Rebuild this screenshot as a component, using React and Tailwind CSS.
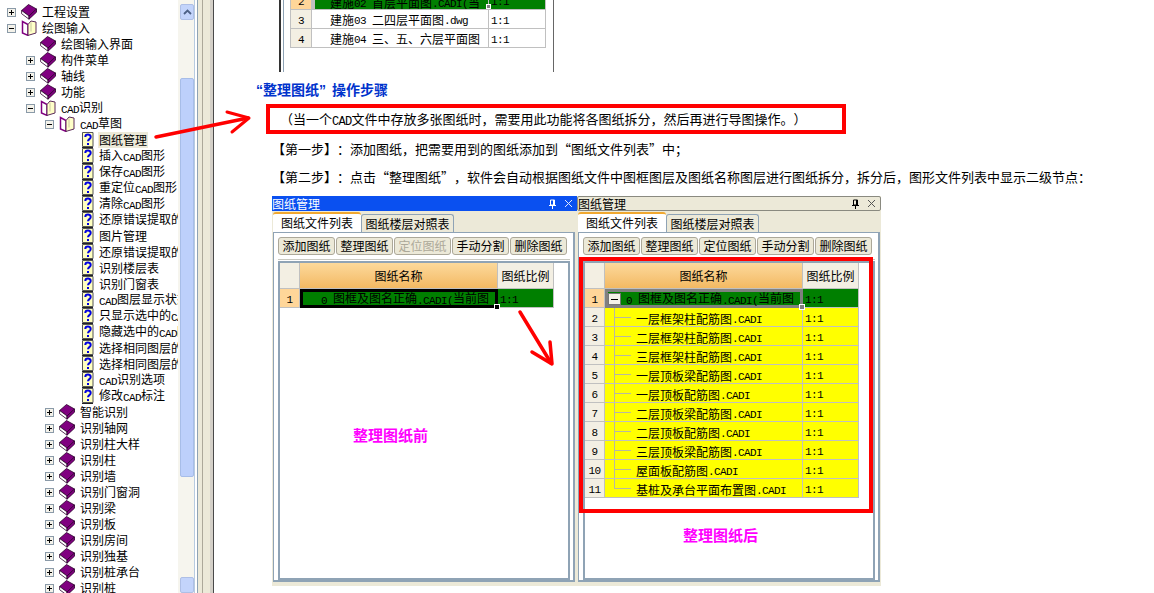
import React from "react";

const FONT = "[font-family:'Noto_Sans_CJK_SC','Liberation_Sans',sans-serif]";

// Latin runs are condensed so that each character takes half of a CJK glyph
function T({ children, big }) {
  const parts = String(children).split(/([A-Za-z0-9.:() ]+)/);
  return (
    <>
      {parts.map((p, i) =>
        /^[A-Za-z0-9.:() ]+$/.test(p) ? (
          <span
            key={i}
            className={`relative top-[1px] font-['Liberation_Mono',monospace] whitespace-pre ${
              big ? "text-[12px] tracking-[-0.7px]" : "text-[11px] tracking-[-0.6px]"
            }`}
          >
            {p}
          </span>
        ) : (
          <span key={i}>{p}</span>
        )
      )}
    </>
  );
}

function Expand({ open }) {
  return (
    <svg width="9" height="9" viewBox="0 0 9 9" className="shrink-0">
      <rect x="0.5" y="0.5" width="8" height="8" fill="#f4f2ea" stroke="#8a9aa8" />
      <path d="M2 4.5H7" stroke="#000" />
      {!open && <path d="M4.5 2V7" stroke="#000" />}
    </svg>
  );
}

function Book() {
  return (
    <svg width="16" height="16" viewBox="0 0 16 16" className="shrink-0">
      <path d="M.6 6.5 7.5.5l8 4.5-7.5 7z" fill="#800080" stroke="#2a002a" strokeWidth="0.8" />
      <path d="M.6 6.5v3.2L8 15.2V12z" fill="#fff" stroke="#2a002a" strokeWidth="0.8" />
      <path d="M8 12 15.5 5v3.2L8 15.2z" fill="#800080" stroke="#2a002a" strokeWidth="0.8" />
    </svg>
  );
}

function OpenBook() {
  return (
    <svg width="16" height="16" viewBox="0 0 16 16" className="shrink-0">
      <path d="M1.5 1.5v11.5l5.5 2.4V4.5z" fill="#fff" stroke="#800080" strokeWidth="1.5" />
      <path d="M7 4.5 10 1l5 1v11L7 15.4z" fill="#ffffc8" stroke="#5a2a5a" strokeWidth="1" />
      <path d="M10 2.5v9" stroke="#c8c8a0" />
    </svg>
  );
}

function Help() {
  return (
    <svg width="16" height="16" viewBox="0 0 16 16" className="shrink-0">
      <path d="M4.5.5H15v14H4.5z" fill="#ffffc0" stroke="#555" />
      <path d="M4 15.5h11" stroke="#222" />
      <path d="M7.3 5c0-3.2 5.4-3.2 5.4-.1 0 2.2-2.7 2.2-2.7 4.4" fill="none" stroke="#0000e0" strokeWidth="2" />
      <path d="M9 11h2v2H9z" fill="#0000e0" />
    </svg>
  );
}

const TREE = [
  [0, "c", "工程设置"],
  [0, "o", "绘图输入"],
  [1, "n", "绘图输入界面"],
  [1, "c", "构件菜单"],
  [1, "c", "轴线"],
  [1, "c", "功能"],
  [1, "o", "CAD识别"],
  [2, "o", "CAD草图"],
  [3, "h", "图纸管理", true],
  [3, "h", "插入CAD图形"],
  [3, "h", "保存CAD图形"],
  [3, "h", "重定位CAD图形"],
  [3, "h", "清除CAD图形"],
  [3, "h", "还原错误提取的CAD图元"],
  [3, "h", "图片管理"],
  [3, "h", "还原错误提取的图片"],
  [3, "h", "识别楼层表"],
  [3, "h", "识别门窗表"],
  [3, "h", "CAD图层显示状态"],
  [3, "h", "只显示选中的CAD图元"],
  [3, "h", "隐藏选中的CAD图元"],
  [3, "h", "选择相同图层的图元"],
  [3, "h", "选择相同图层的线"],
  [3, "h", "CAD识别选项"],
  [3, "h", "修改CAD标注"],
  [2, "c", "智能识别"],
  [2, "c", "识别轴网"],
  [2, "c", "识别柱大样"],
  [2, "c", "识别柱"],
  [2, "c", "识别墙"],
  [2, "c", "识别门窗洞"],
  [2, "c", "识别梁"],
  [2, "c", "识别板"],
  [2, "c", "识别房间"],
  [2, "c", "识别独基"],
  [2, "c", "识别桩承台"],
  [2, "c", "识别桩"],
];

const INDENT = { 0: "pl-[7px]", 1: "pl-[26px]", 2: "pl-[45px]", 3: "pl-[64px]" };

function TreeRow({ level, kind, label, selected }) {
  return (
    <div className={`flex h-4 items-center whitespace-nowrap ${INDENT[level]}`}>
      <div className="flex w-[14px] shrink-0 items-center">
        {kind === "c" && <Expand />}
        {kind === "o" && <Expand open />}
      </div>
      {kind === "c" && <Book />}
      {kind === "n" && <Book />}
      {kind === "o" && <OpenBook />}
      {kind === "h" && <Help />}
      <span className={`ml-[4px] px-[1px] leading-4 ${selected ? "bg-[#ece9d8]" : ""}`}>
        <T>{label}</T>
      </span>
    </div>
  );
}

function Scrollbar() {
  return (
    <div className="flex w-[17px] shrink-0 flex-col bg-[#f6f5ee] pl-[2px] pt-[4px] pb-[0px] border-r border-[#b8cbe0]">
      <div className="flex h-[16px] w-[14px] items-center justify-center rounded-[2px] bg-[#c3d4fb] border border-[#aebfe6]">
        <svg width="9" height="6" viewBox="0 0 9 6">
          <path d="M1 5 4.5 1.5 8 5" fill="none" stroke="#4d6185" strokeWidth="1.8" />
        </svg>
      </div>
      <div className="mt-[58px] h-[412px] w-[14px] rounded-[2px] bg-[#bdd0fb] border border-[#a7bde8]" />
      <div className="mt-[100px] h-[16px] w-[14px] rounded-[2px] bg-[#c3d4fb] border border-[#aebfe6]" />
    </div>
  );
}

function Sidebar() {
  return (
    <div className="flex w-[198px] shrink-0 border-r border-[#8fa3b5]">
      <div className="min-w-0 flex-1 overflow-hidden pt-[4px]">
        {TREE.map(([level, kind, label, selected], i) => (
          <TreeRow key={i} level={level} kind={kind} label={label} selected={selected} />
        ))}
      </div>
      <Scrollbar />
      <div className="w-[2px] shrink-0 bg-white" />
    </div>
  );
}

function Splitter() {
  return (
    <div className="flex w-[18px] shrink-0">
      <div className="w-[5px] bg-[#ece9d8] border-r border-[#aca899]" />
      <div className="w-[7px] bg-[#ece9d8]" />
      <div className="w-[4px] bg-[#d4d0c8] border-r border-[#4a4a4a]" />
      <div className="w-[2px] bg-white" />
    </div>
  );
}

function DocTable() {
  const cell = "flex h-[19px] items-center border-r border-b border-[#c0c0c0] pt-[2px]";
  const rows = [
    ["3", "建施03 二四层平面图.dwg"],
    ["4", "建施04 三、五、六层平面图"],
  ];
  return (
    <div className="ml-[63px] flex h-[72px] w-[275px] overflow-hidden border-l-2 border-r border-l-[#333] border-r-[#666]">
      <div className="ml-[2px] h-full border-l border-[#8fa3b5] pl-[6px]">
        <div className="-mt-[9px] grid w-[255px] grid-cols-[21px_177px_57px] border-l border-[#c0c0c0]">
          <div className={`${cell} justify-center bg-[#ffd699]`}><T>2</T></div>
          <div className={`${cell} relative border-[3px] border-[#808080] bg-[#007f00] pl-[15px] whitespace-nowrap overflow-hidden`}>
            <T>建施02 首层平面图.CADI(当</T>
          </div>
          <div className={`${cell} relative bg-[#007f00] pl-[2px]`}>
            <T>1:1</T>
            <span className="absolute -left-[3px] bottom-[0px] h-[5px] w-[5px] bg-[#808080] border border-white" />
          </div>
          {rows.map(([n, name]) => (
            <React.Fragment key={n}>
              <div className={`${cell} justify-center bg-[#f3efe3]`}><T>{n}</T></div>
              <div className={`${cell} pl-[18px] whitespace-nowrap overflow-hidden`}><T>{name}</T></div>
              <div className={`${cell} pl-[2px]`}><T>1:1</T></div>
            </React.Fragment>
          ))}
        </div>
      </div>
    </div>
  );
}

const BUTTONS = ["添加图纸", "整理图纸", "定位图纸", "手动分割", "删除图纸"];

const ROWS = [
  "一层框架柱配筋图.CADI",
  "二层框架柱配筋图.CADI",
  "三层框架柱配筋图.CADI",
  "一层顶板梁配筋图.CADI",
  "一层顶板配筋图.CADI",
  "二层顶板梁配筋图.CADI",
  "二层顶板配筋图.CADI",
  "三层顶板梁配筋图.CADI",
  "屋面板配筋图.CADI",
  "基桩及承台平面布置图.CADI",
];

function PinClose({ dark }) {
  const c = dark ? "#000" : "#fff";
  return (
    <div className="flex items-center gap-[7px] pr-[4px]">
      <svg width="9" height="10" viewBox="0 0 9 10">
        <path d="M2.5 1h4v5h-4zM1 6.5h7M4.5 6.5V10M5.5 1v5" fill="none" stroke={c} strokeWidth="1" />
      </svg>
      <svg width="9" height="9" viewBox="0 0 9 9">
        <path d="M1 1l7 7M8 1 1 8" stroke={dark ? "#555" : "#dfe8ff"} strokeWidth="1" />
      </svg>
    </div>
  );
}

function Dialog({ after }) {
  const line = "border-r border-b border-[#c0c0c0]";
  const ctrl = "relative flex h-[19px] items-center overflow-hidden whitespace-nowrap";
  return (
    <div className={`flex h-[390px] flex-col bg-[#ece9d8] ${after ? "w-[304px]" : "w-[305px]"}`}>
      <div
        className={`flex h-[15px] shrink-0 items-center justify-between leading-[15px] ${
          after ? "rounded-[2px] border border-[#8a8a80] text-black" : "bg-[#0a50f0] text-white"
        }`}
      >
        <span>图纸管理</span>
        <PinClose dark={after} />
      </div>
      <div className="ml-[1px] flex h-[21px] shrink-0 items-end">
        <div className="flex h-[20px] w-[88px] items-center justify-center rounded-t-[3px] border-t-2 border-[#f0a830] bg-white">
          图纸文件列表
        </div>
        <div className="flex h-[18px] w-[93px] items-center justify-center rounded-t-[3px] border border-b-0 border-[#8fa3b5] bg-[#ece9d8]">
          图纸楼层对照表
        </div>
      </div>
      <div className="ml-[1px] mb-[4px] flex h-[350px] w-[302px] flex-col border border-r-2 border-b-2 border-[#8fa3b5] bg-white pl-[4px] pr-[3px]">
        <div className="flex h-[27px] shrink-0 items-center gap-[1px] pt-[4px] pb-[4px] border-b border-[#c8c8c0]">
          {BUTTONS.map((b) => (
            <div
              key={b}
              className={`flex h-[18px] w-[57px] shrink-0 items-center justify-center rounded-[3px] border border-[#aca899] bg-[#ece9d8] ${
                !after && b === "定位图纸" ? "text-[#aca899]" : "text-black"
              }`}
            >
              {b}
            </div>
          ))}
        </div>
        <div className="mt-[1px] min-h-0 flex-1 border-2 border-[#8fa3b5] bg-white">
          <div className="grid w-[274px] grid-cols-[20px_198px_56px]">
            <div className={`h-[26px] bg-[#f3efe3] ${line}`} />
            <div className={`flex h-[26px] items-center justify-center bg-linear-to-b from-[#fcd99b] to-[#f3b962] ${line}`}>图纸名称</div>
            <div className={`flex h-[26px] items-center justify-center bg-[#f3efe3] ${line}`}>图纸比例</div>

            <div className={`flex h-[19px] items-center justify-center bg-[#ffd699] pt-[2px] ${line}`}><T>1</T></div>
            <div className={`relative flex h-[19px] items-center whitespace-nowrap border-[3px] bg-[#007f00] pl-[18px] pt-[1px] ${after ? "border-[#808080]" : "border-black"}`}>
              {after && (
                <span className="absolute left-[0px] top-[1px] flex h-[12px] w-[13px] items-center justify-center border border-[#777] bg-[#f4f2ea]">
                  <span className="h-[1px] w-[7px] bg-black" />
                </span>
              )}
              <div className="overflow-hidden"><T>0 图框及图名正确.CADI(当前图</T></div>
              <span className={`absolute -right-[5px] -bottom-[5px] z-10 h-[6px] w-[6px] border border-white ${after ? "bg-[#808080]" : "bg-black"}`} />
            </div>
            <div className={`flex h-[19px] items-center bg-[#007f00] pl-[2px] pt-[2px] ${line}`}><T>1:1</T></div>

            {after &&
              ROWS.map((name, i) => (
                <React.Fragment key={name}>
                  <div className={`flex h-[19px] items-center justify-center bg-[#f3efe3] pt-[1px] ${line}`}><T>{String(i + 2)}</T></div>
                  <div className={`${ctrl} bg-[#ffff00] pl-[31px] pt-[3px] ${line}`}>
                    <span className={`absolute left-[9px] top-0 w-[1px] bg-[#b8b8a0] ${i === ROWS.length - 1 ? "h-[9px]" : "h-[19px]"}`} />
                    <span className="absolute left-[9px] top-[9px] h-[1px] w-[17px] bg-[#b8b8a0]" />
                    <T>{name}</T>
                  </div>
                  <div className={`flex h-[19px] items-center bg-[#ffff00] pl-[2px] pt-[1px] ${line}`}><T>1:1</T></div>
                </React.Fragment>
              ))}
          </div>
        </div>
      </div>
    </div>
  );
}

function Main() {
  return (
    <div className="relative min-w-0 flex-1">
      <DocTable />
      <div className="ml-[40px] mt-[10px] h-4 whitespace-nowrap font-['Liberation_Sans','Noto_Sans_CJK_SC',sans-serif] text-[14px] font-bold leading-4 text-[#0033cc]">
        “整理图纸”<span className="ml-[6px]">操作步骤</span>
      </div>
      <div className="ml-[50px] mt-[6px] flex h-[30px] w-[580px] items-center border-4 border-[#ff0000] pl-[10px] pt-[1px] text-[13px] leading-4 whitespace-nowrap">
        <span>（当一个<T big>CAD</T>文件中存放多张图纸时，需要用此功能将各图纸拆分，然后再进行导图操作。）</span>
      </div>
      <div className="ml-[56px] mt-[7px] h-4 text-[13px] leading-4 whitespace-nowrap">【第一步】：添加图纸，把需要用到的图纸添加到“图纸文件列表”中；</div>
      <div className="ml-[56px] mt-[12px] h-4 text-[13px] leading-4 whitespace-nowrap">【第二步】：点击“整理图纸”，软件会自动根据图纸文件中图框图层及图纸名称图层进行图纸拆分，拆分后，图形文件列表中显示二级节点：</div>
      <div className="ml-[56px] mt-[11px] flex">
        <div className="relative">
          <Dialog />
          <span className="absolute left-[81px] top-[231px] text-[15px] font-bold leading-4 text-[#ff00ff] whitespace-nowrap">整理图纸前</span>
        </div>
        <div className="relative">
          <Dialog after />
          <div className="pointer-events-none absolute left-[2px] top-[61px] h-[256px] w-[294px] border-4 border-[#ff0000]" />
          <span className="absolute left-[106px] top-[331px] text-[15px] font-bold leading-4 text-[#ff00ff] whitespace-nowrap">整理图纸后</span>
        </div>
      </div>
    </div>
  );
}

export default function App() {
  return (
    <div className={`relative flex h-[593px] w-[1154px] overflow-hidden bg-white text-xs leading-4 text-black [text-spacing-trim:space-all] ${FONT}`}>
      <Sidebar />
      <Splitter />
      <Main />
      <svg className="pointer-events-none absolute left-0 top-0" width="1154" height="593" viewBox="0 0 1154 593">
        <g fill="none" stroke="#ff0000" strokeLinecap="round" strokeLinejoin="round">
          <path d="M156 137 248 118" strokeWidth="3.5" />
          <path d="M227 112 249 118 232 132" strokeWidth="3" />
          <path d="M520 312 551 363" strokeWidth="3.5" />
          <path d="M550 342 552 364 532 352" strokeWidth="3.5" />
        </g>
      </svg>
    </div>
  );
}
